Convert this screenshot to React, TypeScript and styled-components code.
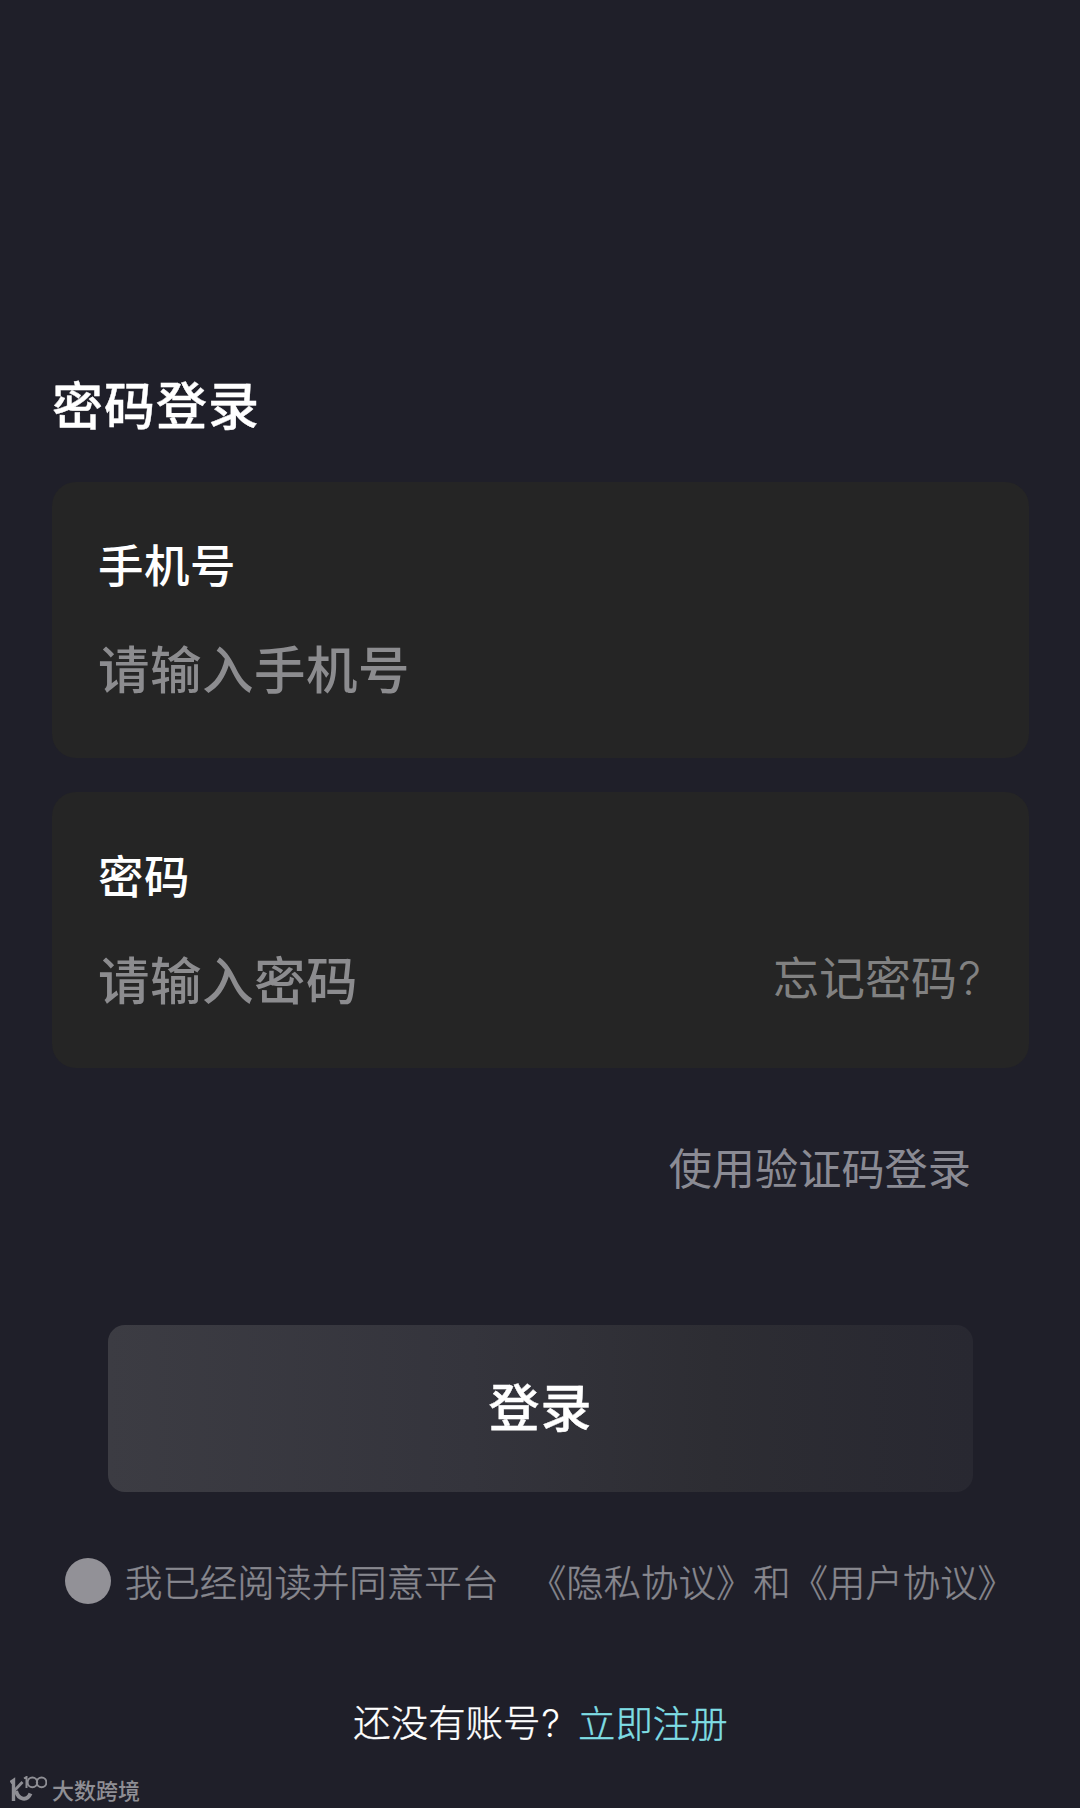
import React from "react";
import styled, { createGlobalStyle } from "styled-components";

const cjk = `"Noto Sans CJK SC", "Noto Sans", sans-serif`;

const GlobalStyle = createGlobalStyle`
  * { box-sizing: border-box; }
  html, body { margin: 0; background: #fff; }
  body { font-family: ${cjk}; }
  button, input { font-family: inherit; border: 0; padding: 0; background: none; outline: none; }
`;

const Screen = styled.main`
  width: 1080px;
  height: 1808px;
  padding: 367px 51px 0 52px;
  display: flex;
  flex-direction: column;
  overflow: hidden;
  background: #1f1f29;
`;

const Title = styled.h1`
  margin: 0 0 43px;
  height: 72px;
  font-size: 51px;
  letter-spacing: 1px;
  line-height: 72px;
  font-weight: 500;
  color: #fff;
  -webkit-text-stroke: 0.4px #fff;
`;

const Card = styled.section<{ $top: number }>`
  flex: none;
  height: 276px;
  margin-bottom: 34px;
  padding: ${(p) => p.$top}px 48px 0 46px;
  border-radius: 24px;
  background: #252525;
`;

const Label = styled.label`
  display: block;
  height: 66px;
  font-size: 45.5px;
  letter-spacing: 0.5px;
  line-height: 66px;
  font-weight: 500;
  color: #fff;
`;

const FieldRow = styled.div`
  display: flex;
  align-items: center;
  justify-content: space-between;
  height: 72px;
  margin-top: 34px;
`;

const Field = styled.input`
  flex: 1;
  min-width: 0;
  height: 72px;
  font-size: 51.5px;
  letter-spacing: 0.5px;
  font-weight: 500;
  color: #fff;
  &::placeholder { color: #8c8c8f; opacity: 1; }
`;

const Forgot = styled.button`
  height: 66px;
  margin-top: -5px;
  font-size: 46px;
  line-height: 66px;
  color: #818181;
  white-space: nowrap;
`;

const Mark = styled.span`
  margin-left: 1px;
  font-family: Inter, sans-serif;
  font-weight: 300;
  -webkit-text-stroke: 0;
`;

const CodeLogin = styled.button`
  align-self: flex-end;
  margin: 34px 58px 0 0;
  height: 60px;
  font-size: 43.2px;
  line-height: 60px;
  color: #8b8b94;
`;

const Submit = styled.button`
  flex: none;
  height: 167px;
  margin: 129px 56px 0;
  padding-bottom: 8px;
  border-radius: 17px;
  background: linear-gradient(90deg, #3c3c43 0%, #34343c 42%, #2d2d33 70%, #282831 100%);
  font-size: 51px;
  letter-spacing: 1px;
  line-height: 72px;
  font-weight: 500;
  color: #fff;
  -webkit-text-stroke: 0.4px #fff;
`;

const Agreement = styled.div`
  display: flex;
  align-items: center;
  height: 54px;
  margin: 62px 0 0 13px;
  font-size: 37.4px;
  line-height: 54px;
  color: #88888f;
  white-space: nowrap;
  font-weight: 300;
  -webkit-text-stroke: 0.4px #88888f;
`;

const Radio = styled.span`
  width: 46px;
  height: 46px;
  margin-right: 14px;
  border-radius: 50%;
  background: #929197;
`;

const Policies = styled.span`
  margin-left: 30px;
`;

const Register = styled.div`
  display: flex;
  align-items: center;
  justify-content: center;
  height: 54px;
  margin-top: 87px;
  font-size: 37.4px;
  line-height: 54px;
  font-weight: 300;
  color: #fff;
  white-space: nowrap;
  -webkit-text-stroke: 0.4px #fff;
`;

const RegisterLink = styled.a`
  margin-left: 18px;
  color: #7fdde4;
  -webkit-text-stroke: 0.4px #7fdde4;
`;

const Brand = styled.footer`
  display: flex;
  align-items: center;
  gap: 5px;
  height: 30px;
  margin: 25px 0 0 -42px;
  font-size: 22px;
  line-height: 30px;
  font-weight: 500;
  color: #8f8f95;
`;

const BrandIcon = () => (
  <svg width="37" height="26" viewBox="0 0 37 26" fill="none" stroke="#8f8f95">
    <path d="M0.5 6.5L3.5 4.5V25" strokeWidth="3.4" />
    <path d="M12.5 6L4 15" strokeWidth="2.8" />
    <path d="M6 15C8.5 24 17 25.5 20.5 17.5" strokeWidth="4" />
    <path d="M14 2.5L16.5 1V12" strokeWidth="2" />
    <circle cx="22.4" cy="6.4" r="4.8" strokeWidth="2" />
    <circle cx="31.6" cy="6.4" r="4.8" strokeWidth="2" />
  </svg>
);

export default function App() {
  return (
    <>
      <GlobalStyle />
      <Screen>
        <Title>密码登录</Title>
        <Card $top={48}>
          <Label htmlFor="phone">手机号</Label>
          <FieldRow>
            <Field id="phone" placeholder="请输入手机号" />
          </FieldRow>
        </Card>
        <Card $top={49}>
          <Label htmlFor="password">密码</Label>
          <FieldRow>
            <Field id="password" type="password" placeholder="请输入密码" />
            <Forgot>忘记密码<Mark>?</Mark></Forgot>
          </FieldRow>
        </Card>
        <CodeLogin>使用验证码登录</CodeLogin>
        <Submit>登录</Submit>
        <Agreement>
          <Radio />
          <span>我已经阅读并同意平台</span>
          <Policies>《隐私协议》和《用户协议》</Policies>
        </Agreement>
        <Register>
          <span>还没有账号<Mark>?</Mark></span>
          <RegisterLink>立即注册</RegisterLink>
        </Register>
        <Brand>
          <BrandIcon />
          <span>大数跨境</span>
        </Brand>
      </Screen>
    </>
  );
}
